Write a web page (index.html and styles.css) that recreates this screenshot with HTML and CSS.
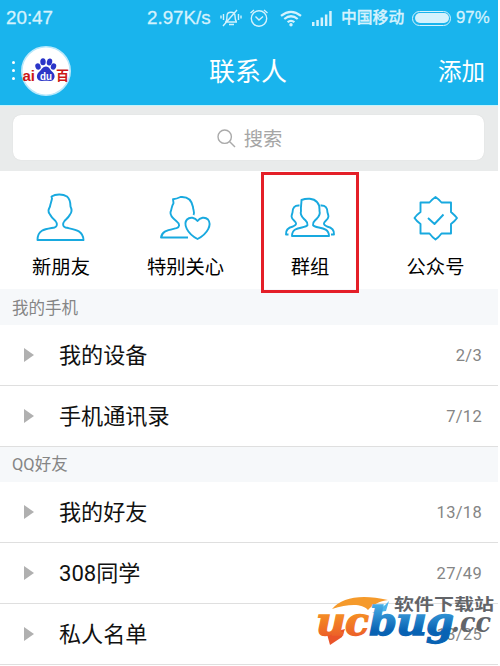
FILE: index.html
```html
<!DOCTYPE html>
<html lang="zh-CN">
<head>
<meta charset="utf-8">
<title>联系人</title>
<link rel="stylesheet" href="styles.css">
</head>
<body>
<main class="screen">
  <header class="header">
    <div class="status">
      <span class="clock">20:47</span>
      <span class="speed">2.97K/s</span>
      <svg class="mute" width="22" height="20" viewBox="0 0 22 20" fill="none" stroke="currentColor" stroke-width="1.4"><path d="M5 14h12M6 14c1-2 1-3 1-6 0-5 8-5 8 0 0 3 0 4 1.500 6M9 16.500h5M3 18L17 2M3.500 6v6M1 7.500v3M18.500 6v6M21 7.500v3"/></svg>
      <svg class="alarm" width="20" height="20" viewBox="0 0 20 20" fill="none" stroke="currentColor" stroke-width="1.400"><circle cx="10" cy="10.500" r="7.700"/><path d="M6.500 8.500l3.500 3.500 4-3.500M1.500 5l3.500-3M18.500 5L15 2"/></svg>
      <svg class="wifi" width="22" height="17" viewBox="0 0 22 17" fill="none" stroke="currentColor" stroke-width="2.200"><path d="M1 5.800q10-8 20 0M4.300 9q6.700-5.500 13.400 0M7.600 12.200q3.400-2.700 6.800 0"/><circle cx="11" cy="14.700" r="1.700" fill="currentColor" stroke="none"/></svg>
      <svg class="signal" width="20" height="16" viewBox="0 0 20 16" fill="currentColor"><path d="M0 12h2.500v4H0zM4.300 10h2.500v6H4.300zM8.600 7.500h2.500V16H8.600zM12.900 4.500h2.500V16h-2.500zM17.200 1h2.500v15h-2.500z"/></svg>
      <span class="carrier">中国移动</span>
      <span class="battery"><i></i></span>
      <span class="percent">97%</span>
    </div>
    <div class="titlebar">
      <span class="dots"><i></i><i></i><i></i></span>
      <svg class="avatar" width="50" height="50" viewBox="0 0 50 50">
        <circle cx="25" cy="25" r="24.200" fill="#fff" stroke="#b9e8fb" stroke-width="1.600"/>
        <g fill="#2b35c8"><ellipse cx="17" cy="20.500" rx="2.600" ry="3.300" transform="rotate(-20 17 20.500)"/><ellipse cx="22" cy="15.700" rx="2.700" ry="3.500"/><ellipse cx="28.500" cy="16" rx="2.700" ry="3.500" transform="rotate(12 28.500 16)"/><ellipse cx="32.500" cy="20.500" rx="2.600" ry="3.300" transform="rotate(20 32.500 20.500)"/><path d="M25 20.500c3 0 4 3 6 5 5 4 2 9.800-2 9.600-3-.5-5-.5-8 0-4.500.2-7.500-5.300-2.500-9.600 2-2 3.500-5 6.500-5z"/></g>
        <text x="1.500" y="34.500" class="logo-red" textLength="12.500" lengthAdjust="spacingAndGlyphs">ai</text>
        <text x="19" y="33.500" class="logo-white" textLength="12" lengthAdjust="spacingAndGlyphs">du</text>
        <text x="35" y="34.300" class="logo-cn">百</text>
      </svg>
      <h1>联系人</h1>
      <a class="add">添加</a>
    </div>
  </header>
  <div class="searchbar"><div class="searchbox">
    <svg width="19" height="19" viewBox="0 0 19 19" fill="none" stroke="#aaa" stroke-width="1.400"><circle cx="7.700" cy="7.700" r="6.700"/><path d="M12.500 12.500l5.500 5.500"/></svg>
    <span>搜索</span>
  </div></div>
  <nav class="actions">
    <div class="action"><svg viewBox="1 1 50 50"><path d="M16.500 4.500c4-2.500 11-3 15.500 0 3.500 3 3.500 7 3.500 10 1.500 3 2 5-.5 8-1.500 3-3 4-5.500 6.500-2 2.500-2 5.500 1 6.500 8 2 17.500 2 18 12.500h-46C2.500 37 11.500 37 19.500 35.500c3-1 3-4 1-6.500-3-2.500-4-3.500-5.500-6.500-2.500-3-1.500-5 0-8 .5-3 1.500-5 2-8z"/></svg><span>新朋友</span></div>
    <div class="action"><svg viewBox="5 .5 50 50"><path d="M37.500 22.500c1.500-3-.5-5-.5-8C35.500 6.500 30 4 24.500 4.500c-3 1.500-5 2-7.500 2.200l.5 4c-2 3-1.500 5-3 9-.5 3 2 6 6 9 4 3 3 6 0 7C13 37.500 6 38 5 45h27"/><path d="M41.500 46.500C31 41 27 31.500 31 27c3-3 8-2 10.500 1.500C44 25 49 24 52 27c4 5 0 14-10.500 19.500z"/></svg><span>特别关心</span></div>
    <div class="action selected"><svg class="wide" viewBox="0 0 50 50"><path d="M16.500 7c5-2 12-2 15.500 2 3 3 2.500 6 2.500 9 1 3 0 5-3 8-2.500 2.500-4 3-3.500 6 2 4 16 .5 16 11H7c0-10.500 13.500-7 15.500-11 .5-3-1-3.500-3.500-6-3-3-4-5-3-8-.5-4 .5-7 .5-11zM14.500 12.500c-5-.5-7 2.500-7 7-1 3-2 5 1.500 8 3 3 3 4-1 6-4 1-7.500 3-7 8h2.500M35.500 12.500c5-.5 7 2.500 7 7 1 3 2 5-1.500 8-3 3-3 4 1 6 4 1 7.500 3 7 8h-3"/></svg><span>群组</span></div>
    <div class="action"><svg viewBox="0 0 50 50"><path d="M25.500 4q3 2 6 5.500h9.500v9.500q4 3.500 6 6-2 3-6 6v9.500h-9.500q-3 4-6 6-3-2-6-6h-9V31q-4-3-6-6 2-3 6-6V9.500h9q3-3.500 6-5.500zM18 25l6.500 6 9-9.500"/></svg><span class="official">公众号</span></div>
  </nav>
  <h2 class="first">我的手机</h2>
  <div class="row"><i class="arrow"></i><span class="name">我的设备</span><span class="count">2/3</span></div>
  <div class="row"><i class="arrow"></i><span class="name">手机通讯录</span><span class="count">7/12</span></div>
  <h2>QQ好友</h2>
  <div class="row"><i class="arrow"></i><span class="name">我的好友</span><span class="count">13/18</span></div>
  <div class="row"><i class="arrow"></i><span class="name">308同学</span><span class="count">27/49</span></div>
  <div class="row"><i class="arrow"></i><span class="name">私人名单</span><span class="count">13/25</span></div>
  <svg class="watermark" width="184" height="56" viewBox="0 0 184 56">
    <defs>
      <linearGradient id="orange" gradientUnits="userSpaceOnUse" x1="0" y1="14" x2="0" y2="48"><stop offset="0" stop-color="#f79a24"/><stop offset="1" stop-color="#ea5429"/></linearGradient>
      <linearGradient id="blue" gradientUnits="userSpaceOnUse" x1="0" y1="8" x2="0" y2="44"><stop offset="0" stop-color="#4db4ea"/><stop offset=".8" stop-color="#0862b3"/></linearGradient>
    </defs>
    <path d="M20 15C30 3 50 0 76 6 68 7 60 11 56 16 50 9 36 10 20 15z" fill="#f59a2b"/>
    <path d="M33 35l-3 8-12 8-3-11z" fill="#ea5429"/>
    <g class="brand">
      <g fill="url(#orange)" stroke="url(#orange)">
        <text x="4" y="41" textLength="30" lengthAdjust="spacingAndGlyphs">u</text>
        <text x="33" y="41" textLength="24" lengthAdjust="spacingAndGlyphs">c</text>
      </g>
      <path d="M60 19q10-4 17-12l-3 10z" fill="#4db4ea"/>
      <g fill="url(#blue)" stroke="url(#blue)">
        <text x="57" y="41" textLength="28" lengthAdjust="spacingAndGlyphs">b</text>
        <text x="84" y="41" textLength="31" lengthAdjust="spacingAndGlyphs">u</text>
        <text x="114" y="41" textLength="28" lengthAdjust="spacingAndGlyphs">g</text>
      </g>
    </g>
    <text x="139" y="38" class="suffix" textLength="40" lengthAdjust="spacingAndGlyphs">.cc</text>
    <text x="82" y="16" class="slogan" textLength="100" lengthAdjust="spacingAndGlyphs">软件下载站</text>
  </svg>
</main>
</body>
</html>
```
FILE: styles.css
```css
* { box-sizing: border-box; }
body { margin: 0; background: #fff; font-family: Roboto, "Noto Sans CJK SC", sans-serif; color: #111; }
.screen { position: relative; width: 498px; height: 666px; overflow: hidden; }
.header { height: 105px; background: #19b4ed; color: #fff; }
.status { display: flex; align-items: center; height: 36px; padding-left: 6px; color: #d4f2fd; font: 18.8px/36px "Liberation Sans", "Noto Sans CJK SC", sans-serif; white-space: nowrap; }
.status svg { flex: none; }
.clock, .speed, .percent { -webkit-text-stroke: .3px #d4f2fd; }
.clock { width: 141px; }
.speed { width: 73px; }
.alarm { margin-left: 7px; }
.wifi { margin-left: 11px; }
.signal { margin-left: 10px; }
.carrier { margin-left: 9px; width: 64px; font-size: 15.8px; font-weight: 500; -webkit-text-stroke: .3px #d4f2fd; }
.battery { margin-left: 7px; width: 39px; height: 15px; padding: 1.5px; border: 1.5px solid #d4f2fd; border-radius: 8px; flex: none; }
.battery i { display: block; height: 100%; border-radius: 5px; background: #d4f2fd; }
.percent { margin-left: 5px; font-size: 16.8px; }
.titlebar { display: flex; align-items: center; height: 69px; padding: 0 13px 0 12px; }
.dots { display: grid; gap: 5px; width: 9px; }
.dots i { width: 3px; height: 3px; border-radius: 50%; background: #fff; }
.avatar { flex: none; }
.logo-red { font: bold 15px "Liberation Sans", sans-serif; fill: #cc1717; }
.logo-white { font: bold 11px "Liberation Sans", sans-serif; fill: #fff; }
.logo-cn { font: bold 13px "Noto Sans CJK SC", sans-serif; fill: #cc1717; }
h1 { margin: 2px 0 0 138px; font-size: 26px; font-weight: 400; line-height: 36px; }
.add { margin: 2px 0 0 auto; font-size: 23.5px; line-height: 36px; }
.searchbar { height: 66px; padding: 9px 14px 11px 13px; background: #e9ebeb; border-top: 1px solid #c5f3fb; }
.searchbox { display: flex; align-items: center; justify-content: center; gap: 8px; height: 45px; background: #fff; border-radius: 8px; box-shadow: 0 0 1px #ccc; color: #a6a6a6; font-size: 19.3px; padding-left: 2px; }
.searchbox svg { margin-top: 2px; }
.searchbox span { line-height: 28px; padding-top: 4px; }
.actions { display: grid; grid-template-columns: 122px 127px 122px 127px; height: 118px; padding-top: 2px; }
.action { display: flex; flex-direction: column; align-items: center; height: 120px; padding-top: 20px; font-size: 19.3px; line-height: 28px; color: #000; }
.action svg { width: 50px; height: 50px; margin-bottom: 11px; overflow: visible; fill: none; stroke: #18a9df; stroke-width: 1.9; stroke-linejoin: round; }
.action .wide { width: 52px; }
.official { padding-left: 2px; }
.selected { position: relative; }
.selected::after { content: ""; position: absolute; inset: -1px 12px 0 12px; border: 3px solid #e41f28; z-index: 1; }
h2 { margin: 0; height: 35px; padding: 0 0 0 12px; background: #f6f8fa; color: #858585; font-size: 16.5px; font-weight: 400; line-height: 35px; }
h2.first { height: 36px; padding-top: 1px; line-height: 37px; }
.row { display: flex; align-items: center; height: 61px; padding: 0 16px 0 24px; border-bottom: 1px solid #dfdfdf; }
.arrow { width: 10px; height: 14px; background: #b0b0b0; clip-path: polygon(0 0, 100% 50%, 0 100%); }
.name { margin-left: 25px; padding-bottom: 1px; font-size: 22.1px; line-height: 32px; color: #111; }
.count { margin-left: auto; font-size: 16.5px; color: #858585; letter-spacing: .3px; }
.watermark { position: absolute; left: 312px; top: 594px; overflow: visible; }
.brand { font: italic 900 40px "DejaVu Serif", serif; stroke-width: 1.3px; }
.suffix { font: italic bold 28px "DejaVu Serif", serif; fill: #626468; }
.slogan { font: bold 16px "Noto Sans CJK SC", sans-serif; fill: #626468; }
```
